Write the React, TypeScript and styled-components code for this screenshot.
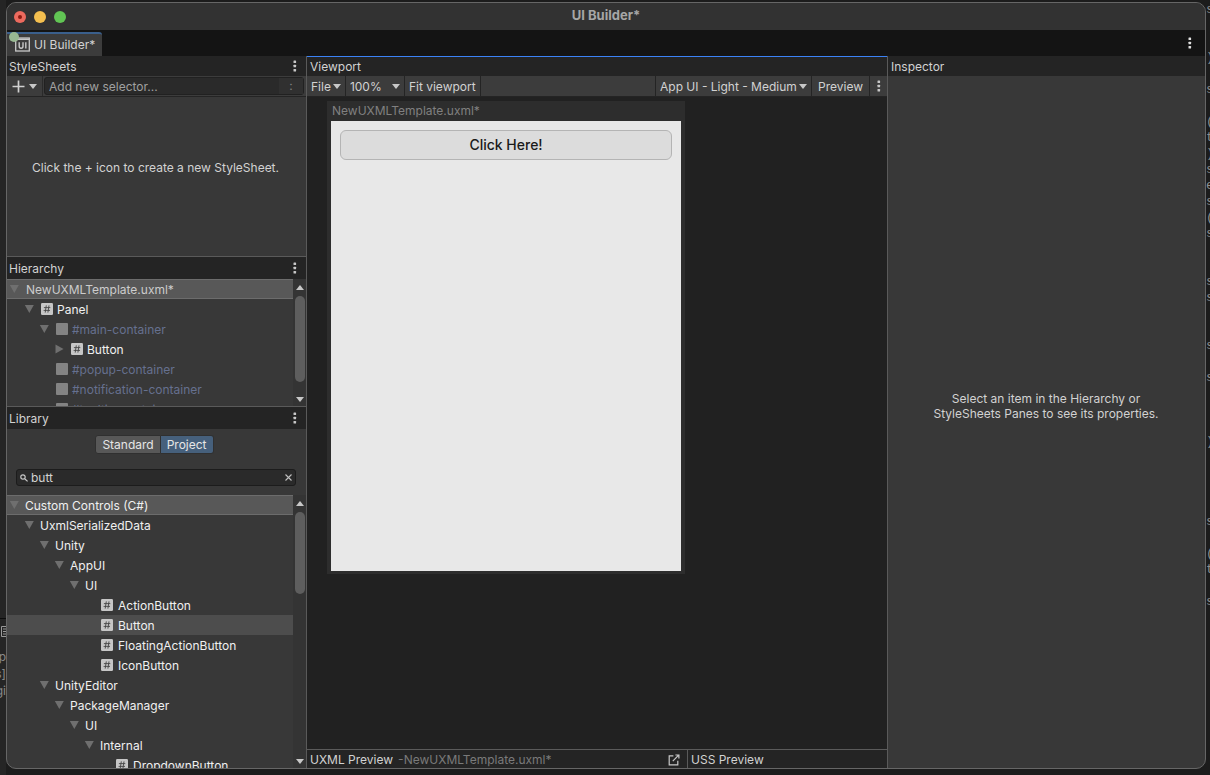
import React from 'react';
import styled, { createGlobalStyle } from 'styled-components';

const GlobalStyle = createGlobalStyle`
  *, *::before, *::after { box-sizing: border-box; }
  body {
    margin: 0;
    background: #1c1c1c;
    color: #d2d2d2;
    font: 400 12px/17px Inter, "Liberation Sans", sans-serif;
  }
  button, input, select {
    font: inherit;
    color: inherit;
    margin: 0;
    padding: 0;
    border: 0;
    background: none;
    border-radius: 0;
    outline: none;
  }
  h1, h2, p, ul { margin: 0; padding: 0; font: inherit; }
  ul { list-style: none; }
  svg { display: block; flex: none; }
`;

const Desktop = styled.div`
  display: grid;
  grid-template-columns: 6px minmax(0, 1fr) 4px;
  height: 100vh;
  overflow: hidden;
`;

const BackdropLeft = styled.div`
  padding-top: 618px;
  overflow: hidden;
  background: #252525;
`;

const BackdropFiles = styled.div`
  display: flex;
  flex-direction: column;
  align-items: flex-end;
  height: 100%;
  padding-top: 7px;
  border-top: 1px solid #0c0c0c;
  color: #8a8a8a;
  white-space: pre;
`;

const BackdropRight = styled.pre`
  margin: 0;
  padding-top: 2px;
  overflow: hidden;
  color: #8f8f8f;
  font: 13px/16px "Liberation Mono", monospace;
`;

const Window = styled.main`
  display: flex;
  flex-direction: column;
  min-width: 0;
  margin: 2px 0 6px;
  overflow: hidden;
  border: 1px solid #666666;
  border-radius: 10px;
  background: #383838;
`;

const TitleBar = styled.header`
  display: grid;
  grid-template-columns: 1fr auto 1fr;
  align-items: center;
  flex: none;
  height: 27px;
  padding: 0 7px;
  background: #323232;
`;

const TrafficLights = styled.div`
  display: flex;
  gap: 8px;
`;

const Light = styled.button<{ $color: string }>`
  display: grid;
  place-items: center;
  width: 12px;
  height: 12px;
  border-radius: 50%;
  background: ${p => p.$color};
`;

const EditedDot = styled.span`
  width: 4px;
  height: 4px;
  border-radius: 50%;
  background: #8c1a10;
`;

const WindowTitle = styled.h1`
  padding-bottom: 3px;
  color: #a6a6a6;
  font-size: 13px;
  font-weight: 700;
`;

const TabBar = styled.div`
  display: flex;
  justify-content: space-between;
  align-items: flex-end;
  flex: none;
  height: 26px;
  background: #141414;
`;

const Tab = styled.button`
  position: relative;
  display: flex;
  align-items: center;
  gap: 4px;
  height: 24px;
  padding: 0 7px 1px 8px;
  border-top: 2px solid #3a5f8c;
  border-radius: 0 3px 0 0;
  background: #3c3c3c;
`;

const StatusDot = styled.span`
  position: absolute;
  top: -2px;
  left: 2px;
  width: 10px;
  height: 10px;
  border-radius: 50%;
  background: #98b892;
`;

const IconButton = styled.button`
  display: grid;
  place-items: center;
  width: 20px;
  height: 20px;
`;

const TabMenu = styled(IconButton)`
  align-self: center;
  margin-right: 5px;
`;

const Columns = styled.div`
  display: grid;
  grid-template-columns: 300px minmax(0, 581fr) minmax(0, 317fr);
  flex: 1;
  min-height: 0;
`;

const SideColumn = styled.div`
  display: grid;
  grid-template-rows: 200px 150px minmax(0, 1fr);
  min-height: 0;
  border-right: 1px solid #5a5a5a;
`;

const Pane = styled.section<{ $divided?: boolean }>`
  display: flex;
  flex-direction: column;
  min-width: 0;
  min-height: 0;
  overflow: hidden;
  border-top: ${p => (p.$divided ? '1px solid #5a5a5a' : '0')};
`;

const PaneHeader = styled.header<{ $tall?: boolean }>`
  display: flex;
  align-items: center;
  justify-content: space-between;
  flex: none;
  height: ${p => (p.$tall ? 22 : 20)}px;
  padding: 0 1px 0 2px;
  background: #242424;
`;

const InspectorHeader = styled(PaneHeader)`
  padding-left: 3px;
`;

const Toolbar = styled.div`
  display: flex;
  flex: none;
  height: 21px;
  border-bottom: 1px solid #242424;
  background: #3c3c3c;
`;

const AddButton = styled.button`
  display: flex;
  align-items: center;
  gap: 4px;
  width: 36px;
  padding-left: 5px;
  border-right: 1px solid #2a2a2a;
`;

const SelectorField = styled.div`
  display: flex;
  align-items: center;
  flex: 1;
  margin: 1px 2px 1px 1px;
  border: 1px solid #212121;
  border-radius: 3px;
  background: #2a2a2a;
`;

const TextInput = styled.input`
  flex: 1;
  min-width: 0;
  height: 17px;
  &::placeholder { color: #a0a0a0; opacity: 1; }
`;

const SelectorInput = styled(TextInput)`
  padding-left: 4px;
`;

const SelectorMenu = styled.button`
  width: 24px;
  height: 16px;
  background: #303030;
  color: #808080;
  line-height: 14px;
`;

const EmptyNote = styled.p`
  display: grid;
  place-items: center;
  flex: 1;
  padding: 0 2px 18px 0;
  text-align: center;
`;

const ScrollArea = styled.div`
  display: flex;
  flex: 1;
  min-height: 0;
`;

const Tree = styled.ul`
  flex: 1;
  min-width: 0;
  overflow: hidden;
`;

const TreeRow = styled.li<{ $depth: number; $kind?: 'root' | 'hover' }>`
  display: flex;
  align-items: center;
  height: 20px;
  padding-left: ${p => p.$depth * 15 + 2}px;
  border: solid ${p => ({ root: '#6c6c6c', hover: '#4d4d4d', none: 'transparent' })[p.$kind ?? 'none']};
  border-width: 1px 0;
  background: ${p => ({ root: '#585858', hover: '#4d4d4d', none: 'none' })[p.$kind ?? 'none']};
`;

const TreeLabel = styled.span<{ $tone: 'item' | 'file' | 'template'; $gap: number }>`
  padding-left: ${p => p.$gap}px;
  color: ${p => ({ item: '#f0f0f0', file: '#cccccc', template: '#66708f' })[p.$tone]};
  white-space: nowrap;
`;

const ElementSwatch = styled.span`
  width: 12px;
  height: 12px;
  border-radius: 1px;
  background: #838383;
`;

const FoldSlot = styled.span`
  flex: none;
  width: 16px;
`;

const IconSlot = styled.span`
  display: grid;
  place-items: center end;
  flex: none;
  width: 13px;
`;

const ScrollBar = styled.div`
  display: flex;
  flex-direction: column;
  flex: none;
  align-items: center;
  width: 13px;
  background: #343434;
`;

const ScrollArrow = styled.button<{ $height: number }>`
  display: grid;
  place-items: center;
  flex: none;
  width: 13px;
  height: ${p => p.$height}px;
`;

const ScrollTrack = styled.div`
  flex: 1;
  width: 10px;
`;

const ScrollThumb = styled.div<{ $height: number }>`
  height: ${p => p.$height}px;
  border-radius: 5px;
  background: #5e5e5e;
`;

const ModeSwitch = styled.div`
  display: flex;
  justify-content: center;
  flex: none;
  padding: 6px 4px 15px 0;
`;

const ModeButton = styled.button<{ $on?: boolean }>`
  height: 19px;
  padding: 0 6px;
  border: 1px solid #303030;
  border-width: ${p => (p.$on ? '1px 1px 1px 0' : '1px')};
  border-radius: ${p => (p.$on ? '0 3px 3px 0' : '3px 0 0 3px')};
  background: ${p => (p.$on ? '#46607c' : '#585858')};
  color: #e6e6e6;
`;

const SearchField = styled.label`
  display: flex;
  align-items: center;
  flex: none;
  gap: 3px;
  height: 17px;
  margin: 0 10px 9px 9px;
  padding: 0 3px;
  border: 1px solid #1c1c1c;
  border-radius: 3px;
  background: #2a2a2a;
`;

const SearchInput = styled(TextInput)`
  height: 15px;
  line-height: 15px;
`;

const ViewportColumn = styled(Pane)`
  border-right: 1px solid #5a5a5a;
  background: #212121;
`;

const ViewportHeader = styled(PaneHeader)`
  padding: 0 3px;
  border-top: 1px solid #3b82f6;
`;

const ToolButton = styled.button<{ $wide?: boolean }>`
  display: flex;
  align-items: center;
  gap: 2px;
  padding: 0 ${p => (p.$wide ? 6 : 4)}px;
  border-right: 1px solid #242424;
  white-space: nowrap;
`;

const ToolSelect = styled.div<{ $leading?: boolean }>`
  display: grid;
  grid-template-columns: 1fr auto;
  align-items: center;
  padding: 0 4px;
  border-right: 1px solid #242424;
  border-left: ${p => (p.$leading ? '1px solid #242424' : '0')};
`;

const SelectBox = styled.select<{ $width: number }>`
  appearance: none;
  width: ${p => p.$width}px;
`;

const Spacer = styled.div`
  flex: 1;
`;

const MenuButton = styled(IconButton)`
  width: 17px;
`;

const CanvasArea = styled.div`
  flex: 1;
  min-height: 0;
  padding: 4px 20px;
  overflow: hidden;
`;

const CanvasFrame = styled.div`
  width: 358px;
  padding: 0 4px 3px;
  background: #2d2d2d;
`;

const CanvasTitle = styled.h2`
  height: 20px;
  padding-left: 1px;
  color: #808080;
  line-height: 19px;
`;

const Canvas = styled.div`
  height: 450px;
  padding: 9px;
  background: #e8e8e8;
`;

const ActionButton = styled.button`
  width: 100%;
  height: 30px;
  border: 1px solid #b4b4b4;
  border-radius: 6px;
  background: #dcdcdc;
  color: #1a1a1a;
  font-size: 14px;
  font-weight: 500;
  line-height: 16px;
`;

const PreviewBar = styled.footer`
  display: grid;
  grid-template-columns: 380px minmax(0, 1fr);
  flex: none;
  height: 19px;
  border-top: 1px solid #5a5a5a;
  background: #242424;
`;

const PreviewCell = styled.div`
  display: flex;
  align-items: center;
  padding: 2px 6px 0 3px;
  line-height: 16px;
  & + & { border-left: 1px solid #5a5a5a; }
`;

const PreviewFile = styled.span`
  flex: 1;
  padding-left: 5px;
  color: #7a7a7a;
`;

const InspectorNote = styled(EmptyNote)`
  padding: 0 1px 32px 0;
  line-height: 15px;
`;

const Dots = ({ color = '#c8c8c8' }: { color?: string }) => (
  <svg width="4" height="12" viewBox="0 0 4 12" fill={color} aria-hidden="true">
    <rect x="0.5" y="0.5" width="2.6" height="2.6" rx="0.6" />
    <rect x="0.5" y="4.7" width="2.6" height="2.6" rx="0.6" />
    <rect x="0.5" y="8.9" width="2.6" height="2.6" rx="0.6" />
  </svg>
);

const Caret = ({ up = false }: { up?: boolean }) => (
  <svg width="8" height="5" viewBox="0 0 8 5" fill="#c8c8c8" aria-hidden="true">
    <path d={up ? 'M4 0 8 5H0Z' : 'M0 0H8L4 5Z'} />
  </svg>
);

const Foldout = ({ state }: { state?: 'open' | 'closed' }) => (
  <svg width="10" height="10" viewBox="0 0 10 10" fill="#6f6f6f" aria-hidden="true">
    {state === 'open' && <path d="M0.8 1H9.8L5.3 9Z" />}
    {state === 'closed' && <path d="M1.5 0.5V9.5L9.5 5Z" />}
  </svg>
);

const HashIcon = () => (
  <svg width="12" height="12" viewBox="0 0 12 12" aria-hidden="true">
    <rect width="12" height="12" rx="1.2" fill="#c6c6c6" />
    <path d="M5.3 2.4 4.2 9.6M8 2.4 6.9 9.6M2.9 4.6H9.3M2.6 7.4H9" stroke="#454545" strokeWidth="0.9" fill="none" />
  </svg>
);

const BuilderIcon = () => (
  <svg width="15" height="15" viewBox="0 0 15 15" fill="none" stroke="#c8c8c8" aria-hidden="true">
    <rect x="0.7" y="1" width="13.6" height="13" strokeWidth="1.3" />
    <path d="M1 2.2H14" strokeWidth="1.6" />
    <path d="M4.2 5.2V9.2Q4.2 11.2 6.1 11.2 8 11.2 8 9.2V5.2M10.8 5.2V11.6" strokeWidth="1.4" />
  </svg>
);

const PlusIcon = () => (
  <svg width="13" height="13" viewBox="0 0 13 13" stroke="#d0d0d0" strokeWidth="1.7" aria-hidden="true">
    <path d="M6.5 0.5V12.5M0.5 6.5H12.5" />
  </svg>
);

const SearchIcon = () => (
  <svg width="8" height="8" viewBox="0 0 8 8" fill="none" stroke="#c8c8c8" strokeWidth="1.2" aria-hidden="true">
    <circle cx="3" cy="3" r="2.2" />
    <path d="M4.7 4.7 7.6 7.4" />
  </svg>
);

const ClearIcon = () => (
  <svg width="7" height="7" viewBox="0 0 7 7" stroke="#c0c0c0" strokeWidth="1.1" aria-hidden="true">
    <path d="M0.5 0.5 6.5 6.5M6.5 0.5 0.5 6.5" />
  </svg>
);

const OpenIcon = () => (
  <svg width="13" height="12" viewBox="0 0 13 12" fill="none" stroke="#c8c8c8" strokeWidth="1.2" aria-hidden="true">
    <path d="M5.4 1.8H1.2V10.8H9.8V6.8M4.8 7.2 10.6 1.2M7.4 1H10.9V4.6" />
  </svg>
);

const ListIcon = () => (
  <svg width="5" height="22" viewBox="0 0 5 22" stroke="#9a9a9a" fill="none" aria-hidden="true">
    <path d="M5 0.5H0.5V10.5H5M2 3H5M2 5.5H5M2 8H5" />
  </svg>
);

type Item = {
  name: string;
  depth: number;
  fold?: 'open' | 'closed';
  icon?: 'hash' | 'box';
  kind?: 'root' | 'hover';
  tone?: 'item' | 'file' | 'template';
};

const hierarchy: Item[] = [
  { name: 'NewUXMLTemplate.uxml*', depth: 0, fold: 'open', kind: 'root', tone: 'file' },
  { name: 'Panel', depth: 1, fold: 'open', icon: 'hash' },
  { name: '#main-container', depth: 2, fold: 'open', icon: 'box', tone: 'template' },
  { name: 'Button', depth: 3, fold: 'closed', icon: 'hash' },
  { name: '#popup-container', depth: 2, icon: 'box', tone: 'template' },
  { name: '#notification-container', depth: 2, icon: 'box', tone: 'template' },
  { name: '#tooltip-container', depth: 2, icon: 'box', tone: 'template' },
];

const library: Item[] = [
  { name: 'Custom Controls (C#)', depth: 0, fold: 'open', kind: 'root' },
  { name: 'UxmlSerializedData', depth: 1, fold: 'open' },
  { name: 'Unity', depth: 2, fold: 'open' },
  { name: 'AppUI', depth: 3, fold: 'open' },
  { name: 'UI', depth: 4, fold: 'open' },
  { name: 'ActionButton', depth: 5, icon: 'hash' },
  { name: 'Button', depth: 5, icon: 'hash', kind: 'hover' },
  { name: 'FloatingActionButton', depth: 5, icon: 'hash' },
  { name: 'IconButton', depth: 5, icon: 'hash' },
  { name: 'UnityEditor', depth: 2, fold: 'open' },
  { name: 'PackageManager', depth: 3, fold: 'open' },
  { name: 'UI', depth: 4, fold: 'open' },
  { name: 'Internal', depth: 5, fold: 'open' },
  { name: 'DropdownButton', depth: 6, icon: 'hash' },
];

type TreeViewProps = { items: Item[]; label: string; thumb: number; iconGap: number };

const TreeView = ({ items, label, thumb, iconGap }: TreeViewProps) => (
  <ScrollArea>
    <Tree aria-label={label}>
      {items.map((item, i) => (
        <TreeRow key={i} $depth={item.depth} $kind={item.kind}>
          <FoldSlot><Foldout state={item.fold} /></FoldSlot>
          {item.icon && <IconSlot>{item.icon === 'hash' ? <HashIcon /> : <ElementSwatch />}</IconSlot>}
          <TreeLabel $tone={item.tone ?? 'item'} $gap={item.icon ? iconGap : item.tone === 'file' ? 1 : 0}>
            {item.name}
          </TreeLabel>
        </TreeRow>
      ))}
    </Tree>
    <ScrollBar>
      <ScrollArrow $height={17} aria-label="Scroll up"><Caret up /></ScrollArrow>
      <ScrollTrack><ScrollThumb $height={thumb} /></ScrollTrack>
      <ScrollArrow $height={13} aria-label="Scroll down"><Caret /></ScrollArrow>
    </ScrollBar>
  </ScrollArea>
);

const PaneMenu = () => <IconButton aria-label="Pane options"><Dots /></IconButton>;

const backdropCode = [
  's', '', '', ')', '', 's', '', '(', 't', ')', 's', 'e', 's', '(', 's', '', '', 's', 's', '',
  '', 's', '', 's', '', '', '', ')', '', '', '', '', 's', '', '(', 't', '', 's',
].join('\n');

export default function App() {
  return (
    <>
      <GlobalStyle />
      <Desktop>
        <BackdropLeft>
          <BackdropFiles aria-hidden="true">
            <ListIcon />
            <span>p</span>
            <span>s]</span>
            <span>gi</span>
          </BackdropFiles>
        </BackdropLeft>
        <Window>
          <TitleBar>
            <TrafficLights>
              <Light $color="#ec6a5e" aria-label="Close"><EditedDot /></Light>
              <Light $color="#f4bf4f" aria-label="Minimize" />
              <Light $color="#61c554" aria-label="Zoom" />
            </TrafficLights>
            <WindowTitle>UI Builder*</WindowTitle>
          </TitleBar>
          <TabBar>
            <Tab>
              <BuilderIcon />
              <StatusDot />
              UI Builder*
            </Tab>
            <TabMenu aria-label="Window options"><Dots color="#e0e0e0" /></TabMenu>
          </TabBar>
          <Columns>
            <SideColumn>
              <Pane>
                <PaneHeader><h2>StyleSheets</h2><PaneMenu /></PaneHeader>
                <Toolbar>
                  <AddButton aria-label="Add StyleSheet"><PlusIcon /><Caret /></AddButton>
                  <SelectorField>
                    <SelectorInput aria-label="New selector" placeholder="Add new selector..." />
                    <SelectorMenu aria-label="Pseudo states">:</SelectorMenu>
                  </SelectorField>
                </Toolbar>
                <EmptyNote>Click the + icon to create a new StyleSheet.</EmptyNote>
              </Pane>
              <Pane $divided>
                <PaneHeader $tall><h2>Hierarchy</h2><PaneMenu /></PaneHeader>
                <TreeView items={hierarchy} label="Hierarchy" thumb={86} iconGap={4} />
              </Pane>
              <Pane $divided>
                <PaneHeader $tall><h2>Library</h2><PaneMenu /></PaneHeader>
                <ModeSwitch>
                  <ModeButton aria-pressed="false">Standard</ModeButton>
                  <ModeButton aria-pressed="true" $on>Project</ModeButton>
                </ModeSwitch>
                <SearchField>
                  <SearchIcon />
                  <SearchInput aria-label="Search library" defaultValue="butt" />
                  <button aria-label="Clear search"><ClearIcon /></button>
                </SearchField>
                <TreeView items={library} label="Library" thumb={82} iconGap={5} />
              </Pane>
            </SideColumn>
            <ViewportColumn>
              <ViewportHeader><h2>Viewport</h2></ViewportHeader>
              <Toolbar>
                <ToolButton>File<Caret /></ToolButton>
                <ToolSelect>
                  <SelectBox $width={42} aria-label="Zoom"><option>100%</option></SelectBox>
                  <Caret />
                </ToolSelect>
                <ToolButton>Fit viewport</ToolButton>
                <Spacer />
                <ToolSelect $leading>
                  <SelectBox $width={139} aria-label="Theme"><option>App UI - Light - Medium</option></SelectBox>
                  <Caret />
                </ToolSelect>
                <ToolButton $wide>Preview</ToolButton>
                <MenuButton aria-label="Viewport options"><Dots /></MenuButton>
              </Toolbar>
              <CanvasArea>
                <CanvasFrame>
                  <CanvasTitle>NewUXMLTemplate.uxml*</CanvasTitle>
                  <Canvas><ActionButton>Click Here!</ActionButton></Canvas>
                </CanvasFrame>
              </CanvasArea>
              <PreviewBar>
                <PreviewCell>
                  <h2>UXML Preview</h2>
                  <PreviewFile>-NewUXMLTemplate.uxml*</PreviewFile>
                  <button aria-label="Open in editor"><OpenIcon /></button>
                </PreviewCell>
                <PreviewCell><h2>USS Preview</h2></PreviewCell>
              </PreviewBar>
            </ViewportColumn>
            <Pane>
              <InspectorHeader><h2>Inspector</h2></InspectorHeader>
              <InspectorNote>
                <span>Select an item in the Hierarchy or<br />StyleSheets Panes to see its properties.</span>
              </InspectorNote>
            </Pane>
          </Columns>
        </Window>
        <BackdropRight aria-hidden="true">{backdropCode}</BackdropRight>
      </Desktop>
    </>
  );
}
